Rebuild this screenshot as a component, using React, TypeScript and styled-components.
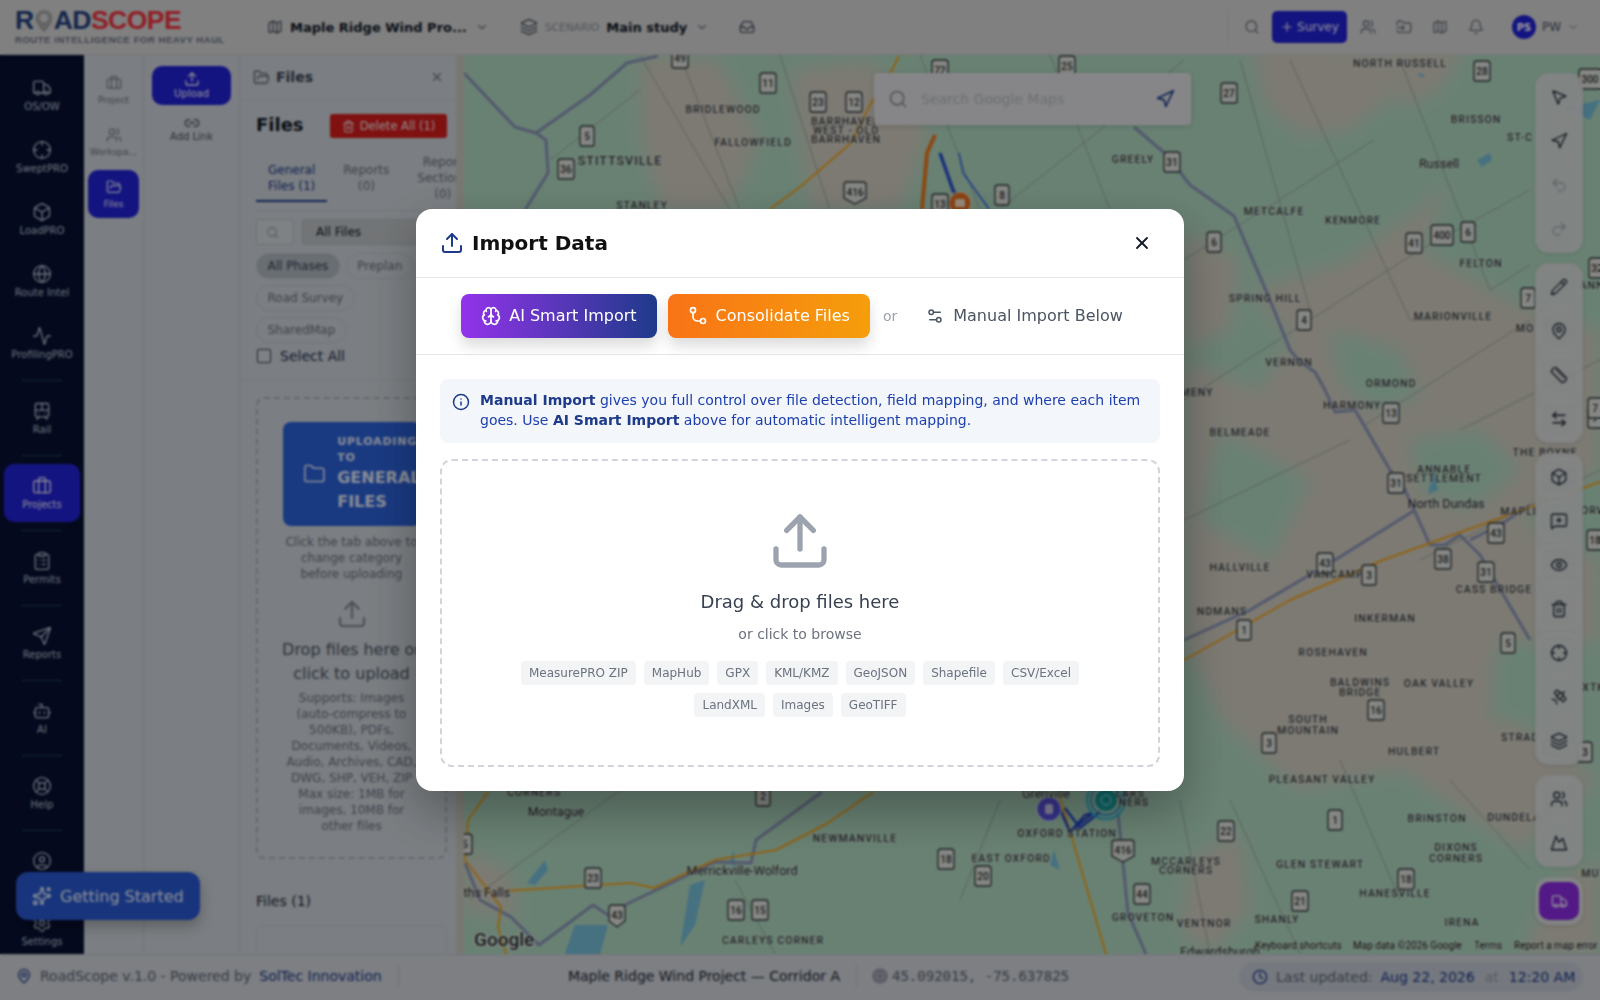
import React from 'react';
import styled, { createGlobalStyle } from 'styled-components';
import {
	Activity,
	ArrowLeftRight,
	Bell,
	Bot,
	Box,
	Brain,
	Briefcase,
	ChevronDown,
	CircleUser,
	ClipboardList,
	Clock,
	Crosshair,
	Eye,
	Folder,
	FolderInput,
	FolderOpen,
	Globe,
	Inbox,
	Info,
	Layers,
	LifeBuoy,
	Link2,
	Map as MapIcon,
	MapPin,
	MessageSquarePlus,
	Mountain,
	MousePointer2,
	Navigation,
	Pencil,
	Plus,
	Redo2,
	Ruler,
	Satellite,
	Search,
	Send,
	Settings,
	Settings2,
	Sparkles,
	Target,
	Trash2,
	TramFront,
	Truck,
	Undo2,
	Upload,
	Users,
	X,
} from 'lucide-react';

const railItems = [
	[{ icon: Truck, label: 'OS/OW' }, { icon: Crosshair, label: 'SweptPRO' }, { icon: Box, label: 'LoadPRO' }, { icon: Globe, label: 'Route Intel' }, { icon: Activity, label: 'ProfilingPRO' }],
	[{ icon: TramFront, label: 'Rail' }],
	[{ icon: Briefcase, label: 'Projects', active: true }],
	[{ icon: ClipboardList, label: 'Permits' }],
	[{ icon: Send, label: 'Reports' }],
	[{ icon: Bot, label: 'AI' }],
	[{ icon: LifeBuoy, label: 'Help' }],
	[{ icon: CircleUser, label: 'Account' }, { icon: Settings, label: 'Settings' }],
];

const toolGroups = [
	[{ icon: MousePointer2 }, { icon: Navigation }, { icon: Undo2, off: true }, { icon: Redo2, off: true }],
	[{ icon: Pencil }, { icon: MapPin }, { icon: Ruler }, { icon: ArrowLeftRight }],
	[{ icon: Box }, { icon: MessageSquarePlus }, { icon: Eye }, { icon: Trash2 }, { icon: Crosshair }, { icon: Satellite }, { icon: Layers }],
	[{ icon: Users }, { icon: Mountain }],
];

const formats = ['MeasurePRO ZIP', 'MapHub', 'GPX', 'KML/KMZ', 'GeoJSON', 'Shapefile', 'CSV/Excel', 'LandXML', 'Images', 'GeoTIFF'];

// map content, in page coordinates (label y is the text centre)
const villages: [string, number, number][] = [
	['BRIDLEWOOD', 723, 109], ['FALLOWFIELD', 753, 142], ['STANLEY', 642, 205], ['BARRHAVEN', 846, 121], ['WEST - OLD', 846, 130], ['BARRHAVEN', 846, 139],
	['GREELY', 1133, 159], ['NORTH RUSSELL', 1400, 63], ['BRISSON', 1476, 119], ['ST-C', 1520, 137], ['METCALFE', 1274, 211], ['KENMORE', 1353, 220],
	['FELTON', 1481, 263], ['SPRING HILL', 1265, 298], ['MARIONVILLE', 1453, 316], ['VERNON', 1289, 362], ['ORMOND', 1391, 383], ['MENY', 1197, 392],
	['HARMONY', 1352, 405], ['BELMEADE', 1240, 432], ['ANNABLE', 1444, 469], ['SETTLEMENT', 1444, 478], ['THE BOYNE', 1545, 452], ['MAPLE', 1520, 511],
	['HALLVILLE', 1240, 567], ['VANCAMP', 1335, 574], ['INKERMAN', 1385, 618], ['CASS BRIDGE', 1494, 589], ['ROSEHAVEN', 1333, 652], ['NDMANS', 1222, 611],
	['BALDWINS', 1360, 682], ['BRIDGE', 1360, 692], ['OAK VALLEY', 1439, 683], ['SOUTH', 1308, 719], ['MOUNTAIN', 1308, 730], ['HULBERT', 1414, 751],
	['PLEASANT VALLEY', 1322, 779], ['BRINSTON', 1437, 818], ['DUNDELA', 1514, 817], ['DIXONS', 1456, 847], ['CORNERS', 1456, 858], ['GLEN STEWART', 1320, 864],
	['HANESVILLE', 1395, 893], ['SHANLY', 1277, 919], ['IRENA', 1462, 922], ['VENTNOR', 1204, 923], ['GROVETON', 1143, 917], ['MCCARLEYS', 1186, 861],
	['CORNERS', 1186, 870], ['EAST OXFORD', 1011, 858], ['OXFORD STATION', 1067, 833], ['NEWMANVILLE', 855, 838], ['CARLEYS CORNER', 773, 940], ['CORNERS', 534, 792],
	['STRAD', 1520, 737], ['LARS', 1130, 793], ['NERS', 1134, 802], ['MUT', 1594, 873], ['XTH', 1594, 687], ['ORW', 1594, 510], ['ANN', 1592, 285], ['MO', 1525, 328],
];

const towns: [string, number, number][] = [
	['Russell', 1439, 163], ['North Dundas', 1446, 503], ['Montague', 556, 811], ['Merrickville-Wolford', 742, 870], ['Smiths Falls', 476, 892], ['Grenville', 1046, 793], ['Edwardsburgh', 1220, 951],
];

const shields: [string, number, number, boolean?][] = [
	['49', 680, 58], ['11', 768, 83], ['5', 587, 136], ['36', 566, 169], ['23', 818, 102], ['12', 854, 102], ['72', 940, 70], ['25', 1067, 66], ['27', 1229, 93],
	['28', 1482, 71], ['300', 1590, 79], ['416', 855, 192, true], ['13', 940, 204], ['8', 1002, 195], ['31', 1172, 162], ['41', 1414, 243], ['400', 1442, 235],
	['6', 1468, 232], ['6', 1214, 242], ['4', 1304, 320], ['13', 1391, 413], ['31', 1396, 483], ['43', 1496, 533], ['7', 1528, 298], ['32', 1597, 268], ['7', 1595, 418],
	['43', 1325, 563], ['3', 1369, 575], ['38', 1443, 559], ['31', 1486, 572], ['1', 1244, 630], ['5', 1508, 643], ['16', 1376, 710], ['3', 1269, 743], ['1', 1335, 820],
	['18', 1406, 879], ['21', 1300, 901], ['22', 1226, 831], ['3', 1585, 752], ['416', 1123, 850, true], ['44', 1142, 894], ['18', 946, 859], ['20', 983, 876],
	['23', 593, 878], ['16', 736, 910], ['15', 760, 910], ['43', 617, 915, true], ['2', 763, 796], ['5', 465, 844], ['7', 1595, 408], ['18', 1595, 540],
];

const tanAreas = [
	'M1250 40 L1405 50 L1395 95 L1350 130 L1300 135 L1265 105 Z',
	'M1400 40 L1470 40 L1440 90 L1400 110 Z',
	'M1184 230 L1240 260 L1230 330 L1184 350 Z',
	'M1250 290 L1350 260 L1430 200 L1450 180 L1420 250 L1510 300 L1600 330 L1600 470 L1520 520 L1600 560 L1600 640 L1500 660 L1520 720 L1600 780 L1520 850 L1400 770 L1300 790 L1220 720 L1184 640 L1184 360 L1260 390 L1290 340 Z',
	'M640 55 L720 60 L760 140 L730 210 L660 210 L640 130 Z',
	'M790 70 L870 60 L930 130 L900 210 L810 210 Z',
	'M1560 880 L1600 860 L1600 954 L1520 954 Z',
	'M1190 860 L1240 830 L1250 910 L1210 954 L1180 930 Z',
	'M464 850 L510 870 L520 920 L464 910 Z',
];

const greenPatches = [
	'M1330 330 L1400 350 L1420 400 L1370 410 L1340 380 Z',
	'M1220 430 L1310 480 L1270 560 L1200 520 Z',
	'M1500 640 L1560 650 L1570 720 L1490 720 Z',
	'M1410 440 L1480 430 L1520 470 L1470 510 L1420 490 Z',
];

const highways = [
	'M464 73 L515 127 L536 133 L546 140 L548 173 L525 210',
	'M536 133 L590 95 L627 63 L658 56',
	'M1134 127 L1167 155 L1190 185 L1234 216 L1270 300 L1290 350 L1300 362 L1315 372 L1325 390 L1335 412 L1355 410 L1390 470 L1405 490 L1430 545 L1445 545 L1460 535 L1480 555 L1530 640',
	'M1415 510 L1335 560 L1250 610 L1184 640',
	'M1118 813 L1123 863 L1128 913 L1146 954',
	'M822 792 L756 840 L751 863 L715 862 L629 903 L608 915 L593 905 L539 945 L511 917 L480 900 L465 863',
	'M1470 540 L1500 525 L1530 505',
];

const orangeRoads = [
	'M1600 482 L1383 560 L1290 600 L1220 640 L1184 660',
	'M899 56 L892 70 L870 105 L851 143 L800 187 L770 209',
	'M873 792 L828 823 L776 850 L715 860 L654 888 L631 883 L506 891',
	'M488 792 L468 820 L465 860 L501 907 L498 927 L506 954',
	'M1060 797 L1106 954',
];

const thinRoads = [
	'M640 55 L730 210', 'M680 55 L740 210', 'M550 160 L640 90', 'M780 55 L830 210', 'M920 55 L980 210', 'M1050 55 L1110 210',
	'M1184 60 L1100 130 L1000 209', 'M1290 60 L1410 320 L1440 320', 'M1400 60 L1490 290 L1530 265', 'M1184 260 L1374 140', 'M1184 400 L1420 250 L1530 190', 'M1240 60 L1310 310',
	'M1365 425 L1530 320', 'M1184 520 L1350 440', 'M1460 430 L1600 360', 'M1420 560 L1600 470', 'M1340 760 L1400 900', 'M1230 800 L1300 954', 'M1450 780 L1530 870',
	'M470 900 L620 790', 'M1000 800 L960 900', 'M1180 800 L1210 954', 'M735 880 L775 954',
];

const waterSpots = [
	'M527 883 L545 860 L548 870 L535 885 Z', 'M690 885 L705 880 L695 925 L680 947 Z', 'M567 947 L575 925 L608 925 L600 954 L565 954 Z', 'M1417 73 L1425 75 L1422 78 Z', 'M1477 160 L1490 153 L1492 160 L1482 167 Z',
	'M1434 470 L1438 490 L1428 494 Z', 'M1565 108 L1600 100 L1590 120 Z', 'M730 860 L734 850 L735 870 Z', 'M1054 850 L1060 870 L1050 865 Z',
];

const Shield = ({ text, x, y, pointed }: { text: string; x: number; y: number; pointed?: boolean }) => {
	const half = text.length === 3 ? 11 : text.length === 2 ? 8 : 7;
	const bottom = pointed
		? `L${x + half} ${y + 6} L${x} ${y + 12} L${x - half} ${y + 6}`
		: `L${x + half} ${y + 8} Q${x + half} ${y + 10} ${x + half - 2} ${y + 10} L${x - half + 2} ${y + 10} Q${x - half} ${y + 10} ${x - half} ${y + 8}`;
	return (
		<g>
			<ShieldShape d={`M${x - half} ${y - 7} Q${x - half} ${y - 10} ${x - half + 3} ${y - 10} L${x + half - 3} ${y - 10} Q${x + half} ${y - 10} ${x + half} ${y - 7} ${bottom} Z`} />
			<ShieldNumber x={x} y={y + 3.5}>
				{text}
			</ShieldNumber>
		</g>
	);
};

const MapDrawing = () => {
	return (
		<MapSvg viewBox="464 55 1136 899" preserveAspectRatio="none">
			<defs>
				<filter id="soft" x="-20%" y="-20%" width="140%" height="140%">
					<feGaussianBlur stdDeviation="9" />
				</filter>
				<clipPath id="mapClip">
					<rect x="464" y="55" width="1136" height="899" />
				</clipPath>
			</defs>
			<g clipPath="url(#mapClip)">
				<rect x="464" y="55" width="1136" height="899" fill="#afd8c0" />
				<g filter="url(#soft)" fill="#d0ccc0">
					{tanAreas.map((d, i) => (
						<path key={i} d={d} />
					))}
				</g>
				<g filter="url(#soft)" fill="#afd8c0">
					{greenPatches.map((d, i) => (
						<path key={i} d={d} />
					))}
				</g>
				<g fill="#75bcd8">
					{waterSpots.map((d, i) => (
						<path key={i} d={d} />
					))}
				</g>
				<g fill="none" stroke="#98a69c" strokeWidth="1">
					{thinRoads.map((d, i) => (
						<path key={i} d={d} />
					))}
				</g>
				<g fill="none" stroke="#8a94b8" strokeWidth="3" strokeLinejoin="round">
					{highways.map((d, i) => (
						<path key={i} d={d} />
					))}
				</g>
				<g fill="none" stroke="#f0a422" strokeWidth="2" strokeLinejoin="round">
					{orangeRoads.map((d, i) => (
						<path key={i} d={d} />
					))}
				</g>
				<path d="M935 135 L927 153 L922 209" fill="none" stroke="#e8791f" strokeWidth="4" />
				<path d="M940 153 L953 190 L965 209" fill="none" stroke="#2a4fd0" strokeWidth="3.5" />
				<path d="M959 153 L963 173 L989 209" fill="none" stroke="#2f63e8" strokeWidth="1.5" />
				<circle cx="960" cy="203" r="11" fill="#e8701f" stroke="#ffffff" strokeOpacity=".4" strokeWidth="2" />
				<rect x="955" y="199" width="10" height="8" rx="1.5" fill="#ffe3cf" />
				<path d="M1056 800 L1070 832 L1085 815 L1093 813 L1070 832 M1065 808 L1080 828 L1100 812" fill="none" stroke="#2747c8" strokeWidth="2.5" />
				<circle cx="1049" cy="809" r="12" fill="#5b55e8" stroke="#fff" strokeOpacity=".5" strokeWidth="1.5" />
				<rect x="1045" y="804" width="8" height="10" rx="2" fill="#fff" opacity=".75" />
				<circle cx="1106" cy="800" r="19" fill="none" stroke="#2bb8d8" strokeWidth="2" />
				<circle cx="1106" cy="800" r="15" fill="none" stroke="#2aa0d8" strokeWidth="2" />
				<circle cx="1106" cy="800" r="11" fill="#18a8a8" />
				<circle cx="1106" cy="800" r="5" fill="none" stroke="#bff" strokeWidth="1" />
				{shields.map(([text, x, y, pointed], i) => (
					<Shield key={i} text={text} x={x} y={y} pointed={pointed} />
				))}
				{villages.map(([text, x, y], i) => (
					<VillageLabel key={i} x={x} y={y + 4}>
						{text}
					</VillageLabel>
				))}
				<VillageLabel x={620} y={165} $big>
					STITTSVILLE
				</VillageLabel>
				{towns.map(([text, x, y], i) => (
					<TownLabel key={i} x={x} y={y + 4.5}>
						{text}
					</TownLabel>
				))}
				<GoogleMark x={474} y={946}>
					Google
				</GoogleMark>
				<AttributionLine x={1255} y={949}>
					Keyboard shortcuts
				</AttributionLine>
				<AttributionLine x={1353} y={949}>
					Map data ©2026 Google
				</AttributionLine>
				<AttributionLine x={1474} y={949}>
					Terms
				</AttributionLine>
				<AttributionLine x={1514} y={949}>
					Report a map error
				</AttributionLine>
			</g>
		</MapSvg>
	);
};

const ImportModal = () => {
	return (
		<Overlay>
			<Modal>
				<ModalHead>
					<ModalTitle>
						<Upload size={24} color="#1e3a8a" strokeWidth={2} />
						<h2>Import Data</h2>
					</ModalTitle>
					<X size={20} color="#111827" strokeWidth={2.2} />
				</ModalHead>
				<ModeRow>
					<ModeButton $gradient="linear-gradient(90deg, #9333ea, #1e3a8a)">
						<Brain size={20} />
						AI Smart Import
					</ModeButton>
					<ModeButton $gradient="linear-gradient(90deg, #f97316, #f59e0b)">
						<svg width="20" height="20" viewBox="0 0 24 24" fill="none" stroke="currentColor" strokeWidth="2" strokeLinecap="round">
							<circle cx="6" cy="5" r="3" />
							<circle cx="18" cy="18" r="3" />
							<path d="M6 8v5a5 5 0 0 0 5 5h4" />
						</svg>
						Consolidate Files
					</ModeButton>
					<OrText>or</OrText>
					<ManualLabel>
						<Settings2 size={18} />
						Manual Import Below
					</ManualLabel>
				</ModeRow>
				<ModalBody>
					<InfoBox>
						<Info size={18} color="#1e3a8a" />
						<p>
							<strong>Manual Import</strong> gives you full control over file detection, field mapping, and where each item goes. Use <strong>AI Smart Import</strong> above for automatic intelligent mapping.
						</p>
					</InfoBox>
					<BigDrop>
						<Upload size={64} color="#9ca3af" strokeWidth={2} />
						<DropTitle>Drag &amp; drop files here</DropTitle>
						<DropHint>or click to browse</DropHint>
						<FormatList>
							{formats.map((f) => (
								<FormatChip key={f}>{f}</FormatChip>
							))}
						</FormatList>
					</BigDrop>
				</ModalBody>
			</Modal>
		</Overlay>
	);
};

const App = () => {
	return (
		<>
			<GlobalStyle />
			<Page>
				<TopBar>
					<Logo>
						<LogoWord>
							R
							<svg width="20" height="24" viewBox="0 0 20 24">
								<path d="M10 1C5 1 1.5 4.6 1.5 9.4 1.5 15 10 23.5 10 23.5S18.5 15 18.5 9.4C18.5 4.6 15 1 10 1Z" fill="#a8a8a8" />
								<circle cx="10" cy="9" r="4.2" fill="#d6d6d6" />
							</svg>
							AD<span>SCOPE</span>
						</LogoWord>
						<LogoTag>ROUTE INTELLIGENCE FOR HEAVY HAUL</LogoTag>
					</Logo>
					<ProjectPicker>
						<MapIcon size={16} color="#4b5563" />
						<strong>Maple Ridge Wind Pro...</strong>
						<ChevronDown size={14} color="#6b7280" />
					</ProjectPicker>
					<ScenarioPicker>
						<Layers size={18} color="#4b5563" />
						<small>SCENARIO</small>
						<strong>Main study</strong>
						<ChevronDown size={14} color="#6b7280" />
					</ScenarioPicker>
					<InboxSlot>
						<Inbox size={16} color="#4b5563" />
					</InboxSlot>
					<TopRight>
						<Search size={16} color="#6b7280" />
						<SurveyButton>
							<Plus size={14} />
							Survey
						</SurveyButton>
						<Users size={16} color="#6b7280" />
						<FolderInput size={16} color="#6b7280" />
						<MapIcon size={16} color="#6b7280" />
						<Bell size={16} color="#6b7280" />
						<UserChip>
							<i>PS</i>
							PW
							<ChevronDown size={12} color="#6b7280" />
						</UserChip>
					</TopRight>
				</TopBar>
				<Workspace>
					<Rail>
						{railItems.map((group, i) => (
							<RailGroup key={i}>
								{group.map((item) => (
									<RailItem key={item.label} $active={item.active}>
										<item.icon size={20} strokeWidth={1.6} />
										{item.label}
									</RailItem>
								))}
							</RailGroup>
						))}
					</Rail>
					<SubRail>
						<SubItem>
							<Briefcase size={16} strokeWidth={1.6} />
							Project
						</SubItem>
						<SubItem>
							<Users size={16} strokeWidth={1.6} />
							Workspa...
						</SubItem>
						<SubItem $active>
							<FolderOpen size={16} strokeWidth={1.8} />
							Files
						</SubItem>
					</SubRail>
					<ActionColumn>
						<UploadAction>
							<Upload size={16} />
							Upload
						</UploadAction>
						<LinkAction>
							<Link2 size={16} />
							Add Link
						</LinkAction>
					</ActionColumn>
					<FilePanel>
						<PanelHead>
							<FolderOpen size={17} color="#4b5563" strokeWidth={1.6} />
							<strong>Files</strong>
							<X size={14} color="#6b7280" />
						</PanelHead>
						<PanelControls>
							<TitleRow>
								<h3>Files</h3>
								<DeleteButton>
									<Trash2 size={13} />
									Delete All (1)
								</DeleteButton>
							</TitleRow>
							<Tabs>
								<Tab $active>
									<span>
										General
										<br />
										Files (1)
									</span>
								</Tab>
								<Tab>
									<span>
										Reports
										<br />
										(0)
									</span>
								</Tab>
								<Tab>
									<span>
										Report
										<br />
										Sections
										<br />
										(0)
									</span>
								</Tab>
							</Tabs>
							<FilterRow>
								<SearchBox>
									<Search size={13} color="#8a9099" />
								</SearchBox>
								<TypeSelect>All Files</TypeSelect>
							</FilterRow>
							<PhaseChips>
								<PhaseChip $active>All Phases</PhaseChip>
								<PhaseChip>Preplan</PhaseChip>
								<PhaseChip>Road Survey</PhaseChip>
								<PhaseChip>SharedMap</PhaseChip>
							</PhaseChips>
							<SelectAll>
								<span />
								Select All
							</SelectAll>
						</PanelControls>
						<PanelDrop>
							<TargetCard>
								<Folder size={24} strokeWidth={1.6} />
								<div>
									<small>
										UPLOADING
										<br />
										TO
									</small>
									<b>
										GENERAL
										<br />
										FILES
									</b>
								</div>
							</TargetCard>
							<SmallNote>
								Click the tab above to
								<br />
								change category
								<br />
								before uploading
							</SmallNote>
							<PanelUploadIcon>
								<Upload size={32} strokeWidth={1.6} />
							</PanelUploadIcon>
							<PanelDropTitle>
								Drop files here or
								<br />
								click to upload
							</PanelDropTitle>
							<SupportNote>
								Supports: Images
								<br />
								(auto-compress to
								<br />
								500KB), PDFs,
								<br />
								Documents, Videos,
								<br />
								Audio, Archives, CAD,
								<br />
								DWG, SHP, VEH, ZIP
								<br />
								Max size: 1MB for
								<br />
								images, 10MB for
								<br />
								other files
							</SupportNote>
						</PanelDrop>
						<FilesCount>Files (1)</FilesCount>
						<FileCard />
					</FilePanel>
					<MapEdge />
					<MapArea>
						<MapDrawing />
						<MapSearch>
							<Search size={20} color="#8a9099" />
							<span>Search Google Maps</span>
							<Navigation size={20} color="#1e3a8a" />
						</MapSearch>
						<Toolbars>
							{toolGroups.map((group, i) => (
								<ToolGroup key={i}>
									{group.map((tool, j) => (
										<ToolButton key={j} $off={tool.off}>
											<tool.icon size={18} strokeWidth={1.8} />
										</ToolButton>
									))}
								</ToolGroup>
							))}
							<ToolGroup>
								<TruckButton>
									<Truck size={17} strokeWidth={1.8} />
								</TruckButton>
							</ToolGroup>
						</Toolbars>
					</MapArea>
				</Workspace>
				<BottomBar>
					<BottomLeft>
						<MapPin size={16} color="#1e3a8a" />
						<span>RoadScope v.1.0 - Powered by</span>
						<BrandLink>SolTec Innovation</BrandLink>
					</BottomLeft>
					<ProjectName>Maple Ridge Wind Project — Corridor A</ProjectName>
					<Coordinates>
						<Target size={16} color="#6b7280" />
						45.092015, -75.637825
					</Coordinates>
					<UpdatedPill>
						<Clock size={16} color="#1e3a8a" />
						<span>Last updated:</span>
						<BrandLink>Aug 22, 2026</BrandLink>
						<AtWord>at</AtWord>
						<BrandLink>12:20 AM</BrandLink>
					</UpdatedPill>
				</BottomBar>
				<GettingStarted>
					<Sparkles size={20} />
					Getting Started
				</GettingStarted>
			</Page>
			<ImportModal />
		</>
	);
};

export default App;

const GlobalStyle = createGlobalStyle`
	html, body {
		margin: 0;
		height: 100%;
		overflow: hidden;
	}
	body {
		font-family: 'DejaVu Sans', sans-serif;
		color: #111827;
	}
	* {
		box-sizing: border-box;
	}
`;

const Page = styled.div`
	position: relative;
	width: 1600px;
	height: 1000px;
	display: flex;
	flex-direction: column;
	overflow: hidden;
	background: #d6d6d6;
`;

const TopBar = styled.header`
	height: 55px;
	flex: none;
	display: flex;
	align-items: center;
	padding-left: 15px;
	background: #d6d6d6;
	border-bottom: 1px solid #c4c4c4;
`;

const Logo = styled.div`
	width: 252px;
	flex: none;
	display: flex;
	flex-direction: column;
	margin-top: -1px;
`;

const LogoWord = styled.div`
	display: flex;
	align-items: center;
	height: 24px;
	font-family: 'Liberation Sans', sans-serif;
	font-weight: 700;
	font-size: 26.5px;
	letter-spacing: -0.5px;
	color: #24417f;
	span {
		color: #f03440;
	}
`;

const LogoTag = styled.div`
	margin-top: 1px;
	font-family: 'Liberation Sans', sans-serif;
	font-size: 9.5px;
	font-weight: 700;
	letter-spacing: 0.55px;
	color: #6b7280;
	white-space: nowrap;
`;

const ProjectPicker = styled.div`
	width: 253px;
	flex: none;
	display: flex;
	align-items: center;
	gap: 7px;
	strong {
		font-size: 13px;
		width: 178px;
		white-space: nowrap;
	}
`;

const ScenarioPicker = styled.div`
	width: 219px;
	flex: none;
	display: flex;
	align-items: center;
	gap: 7px;
	small {
		font-size: 10.5px;
		color: #8a909a;
	}
	strong {
		font-size: 13px;
		margin: 0 1px 0 0;
	}
`;

const InboxSlot = styled.div`
	display: flex;
`;

const TopRight = styled.div`
	margin-left: auto;
	display: flex;
	align-items: center;
	gap: 20px;
	padding-right: 21px;
	border-left: 1px solid #c8c8c8;
	padding-left: 16px;
	height: 32px;
`;

const SurveyButton = styled.div`
	width: 75px;
	height: 32px;
	margin: 0 -7px 0 -8px;
	border-radius: 5px;
	background: #2222d8;
	color: #e8eaf8;
	font-size: 12px;
	display: flex;
	align-items: center;
	justify-content: center;
	gap: 3px;
`;

const UserChip = styled.div`
	display: flex;
	align-items: center;
	gap: 6px;
	margin-left: 8px;
	font-size: 12px;
	color: #4b5563;
	i {
		width: 24px;
		height: 24px;
		border-radius: 50%;
		background: #2222d8;
		color: #fff;
		font-style: normal;
		font-weight: 700;
		font-size: 10px;
		display: flex;
		align-items: center;
		justify-content: center;
	}
`;

const Workspace = styled.div`
	flex: 1;
	min-height: 0;
	display: flex;
`;

const Rail = styled.nav`
	width: 84px;
	flex: none;
	padding: 11px 4px 0;
	background: #081032;
	overflow: hidden;
`;

const RailGroup = styled.div`
	display: flex;
	flex-direction: column;
	gap: 4px;
	padding-bottom: 9px;
	margin-bottom: 8px;
	position: relative;
	&:not(:last-child)::after {
		content: '';
		position: absolute;
		left: 18px;
		right: 18px;
		bottom: 0;
		height: 1px;
		background: #23445a;
	}
`;

const RailItem = styled.div<{ $active?: boolean }>`
	height: 58px;
	flex: none;
	display: flex;
	flex-direction: column;
	align-items: center;
	justify-content: center;
	gap: 3px;
	font-size: 10px;
	border-radius: 10px;
	color: ${(p) => (p.$active ? '#e8eaf8' : '#b5c1d0')};
	background: ${(p) => (p.$active ? '#2222d8' : 'transparent')};
`;

const SubRail = styled.div`
	width: 60px;
	flex: none;
	padding: 11px 4px 0;
	display: flex;
	flex-direction: column;
	gap: 4px;
	background: #cdd3d9;
	border-right: 1px solid #bec4ca;
`;

const SubItem = styled.div<{ $active?: boolean }>`
	height: 48px;
	display: flex;
	flex-direction: column;
	align-items: center;
	justify-content: center;
	gap: 4px;
	font-size: 9px;
	border-radius: 10px;
	white-space: nowrap;
	color: ${(p) => (p.$active ? '#e8eaf8' : '#6b7280')};
	background: ${(p) => (p.$active ? '#2222d8' : 'transparent')};
`;

const ActionColumn = styled.div`
	width: 96px;
	flex: none;
	padding: 11px 8px 0;
	display: flex;
	flex-direction: column;
	gap: 7px;
	background: #cdd3d9;
	border-right: 1px solid #bec4ca;
`;

const UploadAction = styled.div`
	height: 39px;
	padding-bottom: 1px;
	border-radius: 10px;
	background: #2222d8;
	color: #e8eaf8;
	font-size: 10px;
	display: flex;
	flex-direction: column;
	align-items: center;
	justify-content: center;
	gap: 1px;
`;

const LinkAction = styled.div`
	height: 32px;
	font-size: 10px;
	color: #4b5563;
	display: flex;
	flex-direction: column;
	align-items: center;
	justify-content: center;
`;

const FilePanel = styled.aside`
	width: 216px;
	flex: none;
	overflow: hidden;
	background: #cdd3d9;
`;

const PanelHead = styled.div`
	height: 45px;
	display: flex;
	align-items: center;
	gap: 6px;
	padding: 0 12px 0 13px;
	border-bottom: 1px solid #c2c8ce;
	strong {
		font-size: 14px;
		color: #374151;
		flex: 1;
	}
`;

const PanelControls = styled.div`
	padding: 14px 9px 13px 16px;
	border-bottom: 1px solid #bec4ca;
`;

const TitleRow = styled.div`
	height: 24px;
	display: flex;
	align-items: center;
	justify-content: space-between;
	h3 {
		margin: -3px 0 0;
		font-size: 18px;
		font-weight: 700;
	}
`;

const DeleteButton = styled.div`
	width: 117px;
	height: 24px;
	border-radius: 3px;
	background: #d41d1d;
	color: #f0e4e4;
	font-size: 11.5px;
	display: flex;
	align-items: center;
	justify-content: center;
	gap: 5px;
`;

const Tabs = styled.div`
	margin-top: 16px;
	padding-bottom: 8px;
	display: flex;
	gap: 4px;
	border-bottom: 1px solid #bec4ca;
`;

const Tab = styled.div<{ $active?: boolean }>`
	height: 48px;
	flex: none;
	padding: 2px 12px 0;
	display: flex;
	align-items: center;
	text-align: center;
	white-space: nowrap;
	font-size: 12px;
	line-height: 16px;
	color: ${(p) => (p.$active ? '#1e3a8a' : '#6b7280')};
	border-bottom: 2px solid ${(p) => (p.$active ? '#1e3a8a' : 'transparent')};
`;

const FilterRow = styled.div`
	margin-top: 8px;
	display: flex;
	gap: 8px;
`;

const SearchBox = styled.div`
	width: 38px;
	height: 26px;
	flex: none;
	padding-left: 9px;
	display: flex;
	align-items: center;
	background: #d4d9de;
	border: 1px solid #b4bac1;
	border-radius: 4px;
`;

const TypeSelect = styled.div`
	flex: 1;
	height: 26px;
	padding-left: 13px;
	display: flex;
	align-items: center;
	font-size: 12px;
	background: #bfc3c6;
	border: 1px solid #b0b5bb;
	border-radius: 4px;
`;

const PhaseChips = styled.div`
	margin-top: 8px;
	display: flex;
	flex-wrap: wrap;
	gap: 6px;
`;

const PhaseChip = styled.div<{ $active?: boolean }>`
	height: 26px;
	padding: 0 10.5px;
	display: flex;
	align-items: center;
	font-size: 12px;
	border-radius: 13px;
	color: ${(p) => (p.$active ? '#374151' : '#6b7280')};
	background: ${(p) => (p.$active ? '#afb7c0' : 'transparent')};
	border: 1px solid #bec4ca;
`;

const SelectAll = styled.div`
	margin-top: 3px;
	height: 20px;
	padding-left: 1px;
	display: flex;
	align-items: center;
	gap: 9px;
	font-size: 14px;
	color: #1f2d4d;
	span {
		width: 14px;
		height: 14px;
		border: 1.5px solid #374151;
		border-radius: 2px;
		background: #d4d9de;
	}
`;

const PanelDrop = styled.div`
	margin: 17px 9px 0 16px;
	padding: 23px 0;
	display: flex;
	flex-direction: column;
	align-items: center;
	border: 2px dashed #aab0b7;
	border-radius: 8px;
	text-align: center;
`;

const TargetCard = styled.div`
	width: 138px;
	height: 104px;
	padding-left: 20px;
	display: flex;
	align-items: center;
	gap: 12px;
	border-radius: 8px;
	background: #2a60d8;
	color: #e4eaf8;
	text-align: left;
	white-space: nowrap;
	overflow: hidden;
	flex: none;
	small {
		display: block;
		font-size: 11px;
		font-weight: 700;
		line-height: 16px;
		letter-spacing: 0.8px;
	}
	b {
		display: block;
		font-size: 16px;
		line-height: 24px;
	}
`;

const SmallNote = styled.div`
	margin-top: 8px;
	font-size: 12px;
	line-height: 16px;
	color: #6b7280;
	white-space: nowrap;
`;

const PanelUploadIcon = styled.div`
	margin-top: 16px;
	height: 32px;
	color: #7e858f;
`;

const PanelDropTitle = styled.div`
	margin-top: 8px;
	font-size: 16px;
	line-height: 24px;
	color: #4b5563;
	white-space: nowrap;
`;

const SupportNote = styled.div`
	margin-top: 4px;
	font-size: 12px;
	line-height: 16px;
	color: #6b7280;
	white-space: nowrap;
`;

const FilesCount = styled.div`
	margin: 32px 0 0 16px;
	font-size: 14px;
	line-height: 20px;
	color: #1f2937;
`;

const FileCard = styled.div`
	margin: 14px 9px 0 16px;
	height: 100px;
	border: 1px solid #c2c8ce;
	border-radius: 8px;
`;

const MapEdge = styled.div`
	width: 8px;
	flex: none;
	background: #c8c8c0;
`;

const MapArea = styled.main`
	position: relative;
	flex: 1;
	min-width: 0;
	overflow: hidden;
`;

const MapSvg = styled.svg`
	display: block;
	width: 100%;
	height: 100%;
`;

const ShieldShape = styled.path`
	fill: #dfe2dc;
	stroke: #33383d;
	stroke-width: 1.3;
`;

const ShieldNumber = styled.text`
	font-family: Roboto, sans-serif;
	font-size: 10px;
	font-weight: 500;
	text-anchor: middle;
	fill: #333;
`;

const VillageLabel = styled.text<{ $big?: boolean }>`
	font-family: Roboto, sans-serif;
	font-size: ${(p) => (p.$big ? '12.5px' : '10.5px')};
	font-weight: 500;
	letter-spacing: 1px;
	text-anchor: middle;
	fill: #3a3d42;
	paint-order: stroke;
	stroke: rgba(255, 255, 255, 0.25);
	stroke-width: 2px;
`;

const TownLabel = styled.text`
	font-family: Roboto, sans-serif;
	font-size: 12.5px;
	text-anchor: middle;
	fill: #25282c;
	paint-order: stroke;
	stroke: rgba(255, 255, 255, 0.3);
	stroke-width: 2px;
`;

const GoogleMark = styled.text`
	font-family: Roboto, sans-serif;
	font-size: 19px;
	font-weight: 500;
	fill: #2b2b2b;
	paint-order: stroke;
	stroke: rgba(255, 255, 255, 0.7);
	stroke-width: 2px;
`;

const AttributionLine = styled.text`
	font-family: Roboto, sans-serif;
	font-size: 10px;
	fill: #111;
	paint-order: stroke;
	stroke: rgba(255, 255, 255, 0.3);
	stroke-width: 2px;
`;

const MapSearch = styled.div`
	position: absolute;
	left: 410px;
	top: 18px;
	width: 317px;
	height: 52px;
	padding: 0 16px 0 14px;
	display: flex;
	align-items: center;
	gap: 13px;
	background: #e0e0e3;
	border-radius: 4px;
	box-shadow: 0 1px 6px rgba(0, 0, 0, 0.15);
	span {
		flex: 1;
		font-size: 14px;
		color: #b7bbc0;
	}
`;

const Toolbars = styled.div`
	position: absolute;
	right: 17px;
	top: 18px;
	display: flex;
	flex-direction: column;
	gap: 10px;
`;

const ToolGroup = styled.div`
	width: 48px;
	padding: 5px 4px;
	display: flex;
	flex-direction: column;
	gap: 6px;
	border-radius: 14px;
	background: rgba(217, 220, 220, 0.92);
	box-shadow: 0 1px 4px rgba(0, 0, 0, 0.12);
`;

const ToolButton = styled.div<{ $off?: boolean }>`
	width: 40px;
	height: 38px;
	display: flex;
	align-items: center;
	justify-content: center;
	border-radius: 10px;
	color: ${(p) => (p.$off ? '#a8acb1' : '#1f2937')};
	border: 1px solid ${(p) => (p.$off ? 'transparent' : '#e2e3e3')};
`;

const TruckButton = styled(ToolButton)`
	background: #8a2be0;
	color: #f0e8f8;
	border: 0;
`;

const BottomBar = styled.footer`
	height: 46px;
	flex: none;
	display: flex;
	align-items: center;
	padding: 0 0 4px 16px;
	font-size: 14px;
	color: #5d6573;
	background: #d0d4da;
	border-top: 1px solid #bcc0c6;
`;

const BottomLeft = styled.div`
	width: 383px;
	height: 22px;
	flex: none;
	display: flex;
	align-items: center;
	gap: 8px;
	border-right: 1px solid #bcc0c6;
	white-space: nowrap;
`;

const BrandLink = styled.span`
	color: #1e3a8a;
`;

const ProjectName = styled.div`
	width: 458px;
	height: 22px;
	flex: none;
	display: flex;
	align-items: center;
	justify-content: flex-end;
	padding-right: 16px;
	color: #1f2937;
	border-right: 1px solid #bcc0c6;
	white-space: nowrap;
`;

const Coordinates = styled.div`
	margin-left: 15px;
	display: flex;
	align-items: center;
	gap: 4px;
	font-family: 'DejaVu Sans Mono', monospace;
	white-space: nowrap;
`;

const UpdatedPill = styled.div`
	position: absolute;
	right: 17px;
	bottom: 8px;
	width: 344px;
	height: 30px;
	padding-left: 13px;
	display: flex;
	align-items: center;
	gap: 8px;
	border-radius: 15px;
	background: #c4cad4;
	white-space: nowrap;
`;

const AtWord = styled.span`
	color: #949aa4;
	margin: 0 2px;
`;

const GettingStarted = styled.div`
	position: absolute;
	left: 16px;
	top: 872px;
	width: 184px;
	height: 48px;
	padding-left: 16px;
	display: flex;
	align-items: center;
	gap: 8px;
	border-radius: 12px;
	background: #2858d0;
	color: #e4eaf8;
	font-size: 16px;
	box-shadow: 0 6px 14px rgba(0, 0, 0, 0.25);
`;

const Overlay = styled.div`
	position: fixed;
	inset: 0;
	display: flex;
	align-items: center;
	justify-content: center;
	background: rgba(0, 0, 0, 0.4);
	backdrop-filter: blur(1px);
`;

const Modal = styled.div`
	width: 768px;
	height: 582px;
	background: #fff;
	border-radius: 16px;
	overflow: hidden;
	box-shadow: 0 20px 50px rgba(0, 0, 0, 0.3);
`;

const ModalHead = styled.div`
	height: 69px;
	padding: 0 32px 0 24px;
	display: flex;
	align-items: center;
	justify-content: space-between;
	border-bottom: 1px solid #e5e7eb;
`;

const ModalTitle = styled.div`
	display: flex;
	align-items: center;
	gap: 8px;
	h2 {
		margin: 0;
		font-size: 20px;
		font-weight: 700;
		color: #111;
	}
`;

const ModeRow = styled.div`
	height: 77px;
	display: flex;
	align-items: center;
	justify-content: center;
	gap: 12px;
	border-bottom: 1px solid #e5e7eb;
`;

const ModeButton = styled.div<{ $gradient: string }>`
	height: 44px;
	padding: 0 20px 1px;
	display: flex;
	align-items: center;
	gap: 8px;
	border-radius: 8px;
	font-size: 16px;
	color: #fff;
	background: ${(p) => p.$gradient};
	box-shadow: 0 8px 14px rgba(0, 0, 0, 0.14);
	&:first-child {
		margin-right: -1px;
	}
`;

const OrText = styled.span`
	margin: 0 1px;
	font-size: 14px;
	color: #9ca3af;
`;

const ManualLabel = styled.div`
	height: 44px;
	padding: 0 16px 1px;
	display: flex;
	align-items: center;
	gap: 9px;
	font-size: 16px;
	color: #4b5563;
`;

const ModalBody = styled.div`
	padding: 24px;
`;

const InfoBox = styled.div`
	height: 64px;
	padding: 11px 12px;
	display: flex;
	gap: 10px;
	align-items: flex-start;
	border-radius: 8px;
	background: #f3f6fa;
	svg {
		flex: none;
		margin-top: 3px;
	}
	p {
		margin: 0;
		font-size: 14px;
		line-height: 20px;
		color: #1e40af;
	}
	strong {
		color: #1e3a8a;
	}
`;

const BigDrop = styled.div`
	height: 308px;
	margin-top: 16px;
	display: flex;
	flex-direction: column;
	align-items: center;
	justify-content: center;
	border: 2px dashed #d1d5db;
	border-radius: 12px;
`;

const DropTitle = styled.div`
	margin-top: 15px;
	font-size: 18px;
	line-height: 28px;
	color: #374151;
`;

const DropHint = styled.div`
	margin-top: 8px;
	font-size: 14px;
	line-height: 20px;
	color: #6b7280;
`;

const FormatList = styled.div`
	margin-top: 17px;
	max-width: 600px;
	display: flex;
	flex-wrap: wrap;
	justify-content: center;
	gap: 8px;
`;

const FormatChip = styled.span`
	height: 24px;
	padding: 0 8px;
	display: flex;
	align-items: center;
	border-radius: 4px;
	font-size: 12px;
	color: #6b7280;
	background: #f3f4f6;
`;
